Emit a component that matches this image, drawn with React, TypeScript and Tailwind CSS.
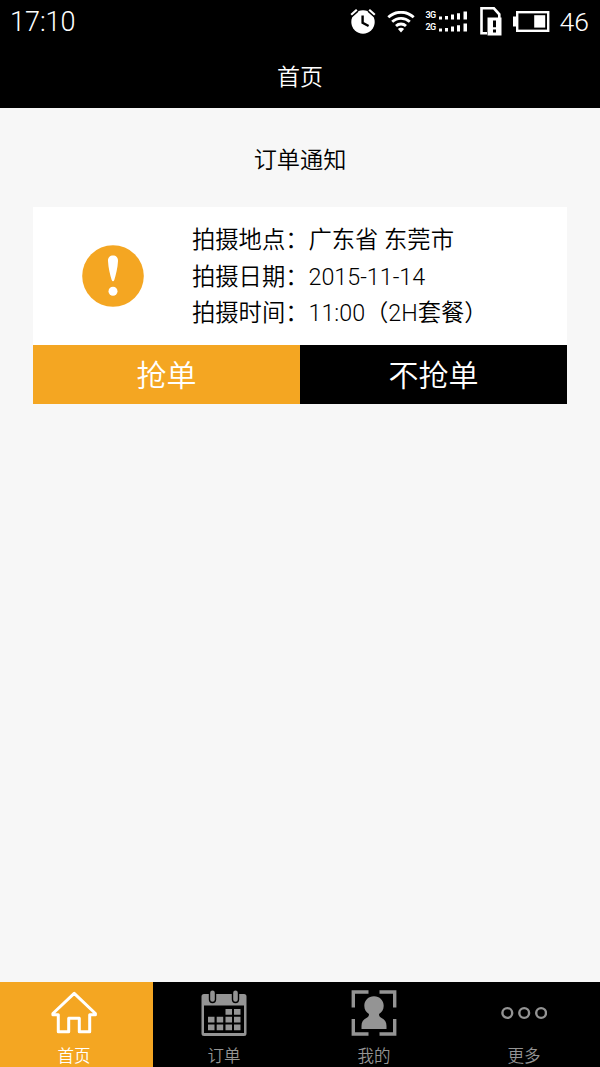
import type { ReactNode } from "react";
import clsx from "clsx";

type Tab = {
  label: string;
  icon: ReactNode;
};

function AlarmIcon() {
  return (
    <svg width="26" height="26" viewBox="0 0 26 26" fill="none">
      <circle cx="13" cy="13" r="11.700" fill="#fff" />
      <path d="M.8 6.200 6.800 .8M25.200 6.200 19.200 .8" stroke="#000" strokeWidth="5" />
      <path d="M1.200 5.800 6.800 .8M24.800 5.800 19.200 .8" stroke="#fff" strokeWidth="2.200" />
      <path d="M12.600 6.500v7.300l6 3.200" stroke="#000" strokeWidth="2.400" />
    </svg>
  );
}

function WifiIcon() {
  return (
    <svg width="28" height="22" viewBox="0 0 28 22" fill="none" stroke="#fff" strokeWidth="2.800">
      <path d="M1.300 6.300a18.500 18.500 0 0 1 25.400 0" />
      <path d="M5.200 10.800a12.800 12.800 0 0 1 17.600 0" />
      <path d="M9 15a7.200 7.200 0 0 1 10 0" />
      <path d="M14 21.500 10.900 18a4.400 4.400 0 0 1 6.200 0Z" fill="#fff" stroke="none" />
    </svg>
  );
}

function SignalRow({ label }: { label: string }) {
  return (
    <div className="flex h-[12.500px] items-center gap-[2px]">
      <span className="w-[10px] text-[9px] leading-none font-semibold tracking-[-0.8px]">{label}</span>
      <svg width="31" height="9" viewBox="0 0 31 9" fill="#fff">
        <path d="M1 5.600h3v3H1zM7 5h3v3.600H7zM13 3.600h3v5h-3zM19 2.200h3v6.400h-3zM25.500 .4h3.500v8.200h-3.500z" />
      </svg>
    </div>
  );
}

function SimIcon() {
  return (
    <svg width="23" height="30" viewBox="0 0 23 30">
      <path d="M7 26.200H1.500V1.300h12.400l5.400 6v6" fill="none" stroke="#fff" strokeWidth="2.600" />
      <path d="M7.500 10.500h14V28.500h-14z" fill="#fff" />
      <path d="M13 13.500h3v6.800h-3zM13 22.500h3v3h-3z" fill="#000" />
    </svg>
  );
}

function BatteryIcon() {
  return (
    <svg width="37" height="22" viewBox="0 0 37 22">
      <path d="M0 5.500h4v10H0z" fill="#fff" />
      <rect x="4.200" y="1.200" width="31" height="18.600" fill="none" stroke="#fff" strokeWidth="2.400" />
      <path d="M21.200 4.200h11v12.400h-11z" fill="#fff" />
    </svg>
  );
}

function HomeIcon() {
  return (
    <svg
      width="46"
      height="46"
      viewBox="0 0 46 46"
      fill="none"
      stroke="#fff"
      strokeWidth="3"
      strokeLinejoin="round"
    >
      <path d="M23.200 3.300 1.900 23.500v1.300h5.400v16.900h10.400V28.200h10.600v13.500h10.400V24.800h5.700v-1.300Z" />
    </svg>
  );
}

function CalendarIcon() {
  return (
    <svg width="46" height="46" viewBox="0 0 46 46">
      <path
        fillRule="evenodd"
        fill="#949494"
        d="M3 4h40a2.500 2.500 0 0 1 2.500 2.500v37A2.500 2.500 0 0 1 43 46H3a2.500 2.500 0 0 1-2.500-2.500v-37A2.500 2.500 0 0 1 3 4ZM3 15.500v27.500h40V15.500Z"
      />
      <g fill="#949494" stroke="#000" strokeWidth="1.400">
        <rect x="8.500" y="-.3" width="6" height="12.800" rx="3" />
        <rect x="31.500" y="-.3" width="6" height="12.800" rx="3" />
      </g>
      <path
        fill="#949494"
        d="M24.500 19h6.500v5.800h-6.500zM33 19h6.500v5.800H33zM7 26.800h6.500v5.600H7zM15.700 26.800h6.500v5.600h-6.500zM24.500 26.800h6.500v5.600h-6.500zM33 26.800h6.500v5.600H33zM7 34.400h6.500v5.800H7zM15.700 34.400h6.500v5.800h-6.500zM24.500 34.400h6.500v5.800h-6.500zM33 34.400h6.500v5.800H33z"
      />
    </svg>
  );
}

function ProfileIcon() {
  return (
    <svg width="46" height="46" viewBox="0 0 46 46">
      <path
        d="M17.500 2H2.300v15.500M28.500 2h15.200v15.500M17.500 44H2.300V29M28.500 44h15.200V29"
        fill="none"
        stroke="#949494"
        strokeWidth="3.400"
      />
      <path
        fill="#949494"
        d="M23 6.300c5.600 0 9.700 4.200 9.700 9.500 0 3.800-1.900 6.600-4.700 8.200 0 1.800.6 2.800 2.200 3.700 3.700 1.600 5.300 4.300 5.300 8.300v3h-25v-3c0-4 1.600-6.700 5.300-8.300 1.600-.9 2.200-1.900 2.200-3.700-2.800-1.600-4.700-4.400-4.700-8.200 0-5.300 4.100-9.500 9.700-9.500Z"
      />
    </svg>
  );
}

function MoreIcon() {
  return (
    <svg width="46" height="46" viewBox="0 0 46 46" fill="none" stroke="#949494" strokeWidth="2.400">
      <circle cx="6.300" cy="23" r="4.900" />
      <circle cx="23.200" cy="23" r="4.900" />
      <circle cx="40.100" cy="23" r="4.900" />
    </svg>
  );
}

const orderInfo = [
  { label: "拍摄地点：", value: "广东省 东莞市" },
  { label: "拍摄日期：", value: "2015-11-14" },
  { label: "拍摄时间：", value: "11:00（2H套餐）" },
];

const tabs: Tab[] = [
  { label: "首页", icon: <HomeIcon /> },
  { label: "订单", icon: <CalendarIcon /> },
  { label: "我的", icon: <ProfileIcon /> },
  { label: "更多", icon: <MoreIcon /> },
];

export default function App() {
  const activeTab = "首页";

  return (
    <div
      lang="zh-CN"
      className="flex h-[1067px] w-[600px] flex-col overflow-hidden bg-[#f7f7f7] font-[Roboto,'Noto_Sans_CJK_SC',sans-serif] font-[350] text-black"
    >
      {/* Status bar */}
      <div className="flex h-[43px] shrink-0 items-center bg-black pr-[11px] pl-[10px] text-white">
        <span className="pt-px text-[27px] leading-none font-light">17:10</span>
        <div className="ml-auto flex items-center">
          <AlarmIcon />
          <div className="ml-[11px]">
            <WifiIcon />
          </div>
          <div className="ml-[11px] flex flex-col">
            <SignalRow label="3G" />
            <SignalRow label="2G" />
          </div>
          <div className="ml-[11px]">
            <SimIcon />
          </div>
          <div className="ml-[10px]">
            <BatteryIcon />
          </div>
          <span className="ml-[10px] pt-px text-[26.500px] leading-none font-light">46</span>
        </div>
      </div>

      {/* Title */}
      <header className="flex h-[65px] shrink-0 items-center justify-center bg-black pt-[5px] text-[23px] text-white">
        <h1>首页</h1>
      </header>

      <main className="flex flex-1 flex-col px-[33px]">
        <h2 className="flex h-[99px] items-center justify-center pt-[5px] text-[23.200px]">订单通知</h2>

        <section>
          <div className="flex h-[138px] items-center bg-white">
            <div className="flex w-[159px] justify-center">
              <svg width="62" height="62" viewBox="0 0 62 62">
                <circle cx="31" cy="31" r="30.800" fill="#f4a622" />
                <path
                  d="M31 10.500c3 0 5.200 2 5 5.500-.3 7-2.200 14-3.700 19-.5 1.700-2.100 1.700-2.600 0-1.500-5-3.400-12-3.700-19-.2-3.500 2-5.500 5-5.500Z"
                  fill="#fff"
                />
                <circle cx="31" cy="46.300" r="4.500" fill="#fff" />
              </svg>
            </div>
            <div className="flex flex-col pt-[2px] text-[23.300px]">
              {orderInfo.map((item) => (
                <p key={item.label} className="flex h-[36.700px] items-center whitespace-pre">
                  <span>{item.label}</span>
                  <span>{item.value}</span>
                </p>
              ))}
            </div>
          </div>

          <div className="grid h-[58.500px] grid-cols-2 text-[30px] text-white">
            <button className="bg-[#f4a622] pt-[3px]">抢单</button>
            <button className="bg-black pt-[3px]">不抢单</button>
          </div>
        </section>
      </main>

      {/* Bottom tabs */}
      <nav className="grid h-[85px] shrink-0 grid-cols-4 bg-black">
        {tabs.map((tab) => (
          <button
            key={tab.label}
            className={clsx(
              "flex flex-col items-center pt-[8px] text-[16.500px]",
              tab.label === activeTab
                ? "-mr-[3px] bg-[#f4a622] pr-[5px] text-white"
                : "pr-[2px] text-[#949494]"
            )}
          >
            {tab.icon}
            <span className="mt-[9px] leading-[24px]">{tab.label}</span>
          </button>
        ))}
      </nav>
    </div>
  );
}
